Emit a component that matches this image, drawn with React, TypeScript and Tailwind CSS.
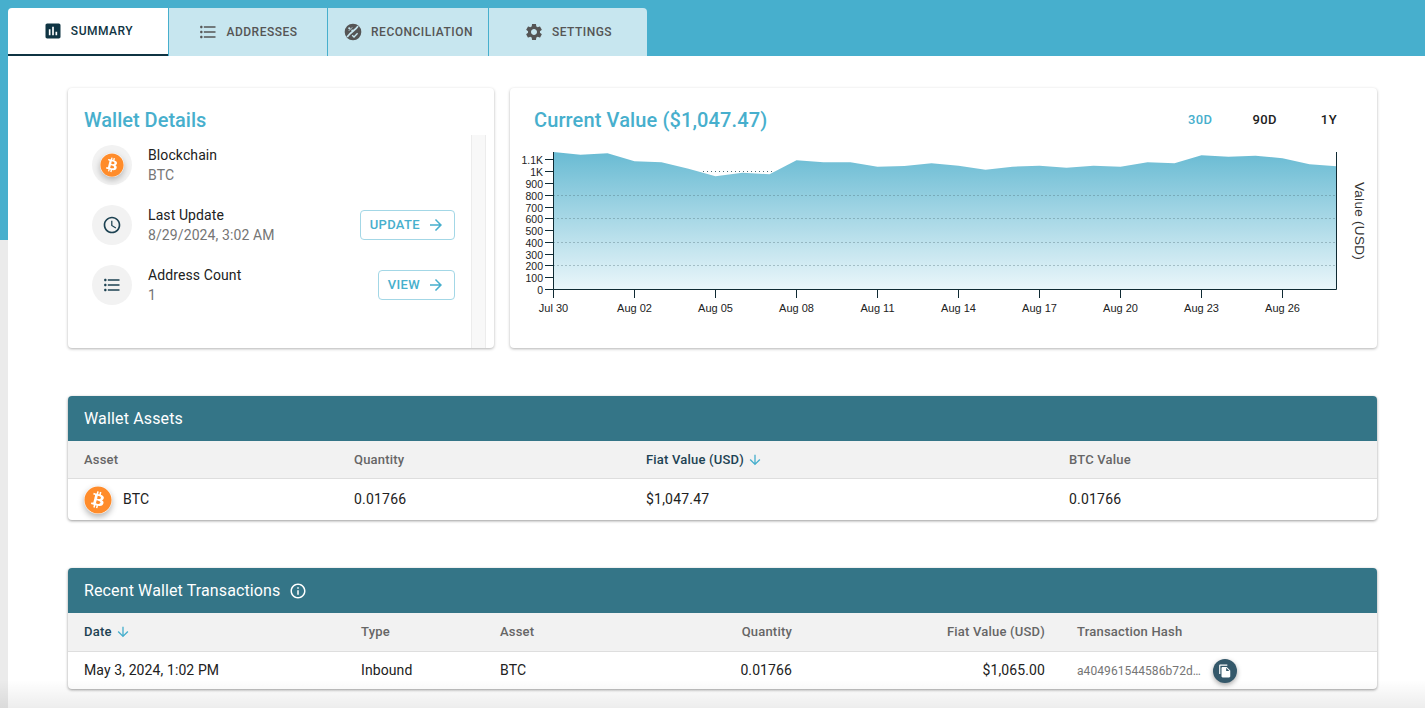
import React from 'react';
import { FaBitcoin } from 'react-icons/fa';

const paths = {
  assessment: 'M19 3H5c-1.1 0-2 .9-2 2v14c0 1.1.9 2 2 2h14c1.1 0 2-.9 2-2V5c0-1.1-.9-2-2-2zM9 17H7v-7h2v7zm4 0h-2V7h2v10zm4 0h-2v-4h2v4z',
  list: 'M4 10.5c-.83 0-1.5.67-1.5 1.5s.67 1.5 1.5 1.5 1.5-.67 1.5-1.5-.67-1.5-1.5-1.5zm0-6c-.83 0-1.5.67-1.5 1.5S3.17 7.5 4 7.5 5.5 6.83 5.5 6 4.83 4.5 4 4.5zm0 12c-.83 0-1.5.68-1.5 1.5s.68 1.5 1.5 1.5 1.5-.68 1.5-1.5-.67-1.5-1.5-1.5zM7 19h14v-2H7v2zm0-6h14v-2H7v2zm0-8v2h14V5H7z',
  settings: 'M19.14 12.94c.04-.3.06-.61.06-.94 0-.32-.02-.64-.07-.94l2.03-1.58c.18-.14.23-.41.12-.61l-1.92-3.32c-.12-.22-.37-.29-.59-.22l-2.39.96c-.5-.38-1.03-.7-1.62-.94l-.36-2.54c-.04-.24-.24-.41-.48-.41h-3.84c-.24 0-.43.17-.47.41l-.36 2.54c-.59.24-1.13.57-1.62.94l-2.39-.96c-.22-.08-.47 0-.59.22L2.74 8.87c-.12.21-.08.47.12.61l2.03 1.58c-.05.3-.09.63-.09.94s.02.64.07.94l-2.03 1.58c-.18.14-.23.41-.12.61l1.92 3.32c.12.22.37.29.59.22l2.39-.96c.5.38 1.03.7 1.62.94l.36 2.54c.05.24.24.41.48.41h3.84c.24 0 .44-.17.47-.41l.36-2.54c.59-.24 1.13-.56 1.62-.94l2.39.96c.22.08.47 0 .59-.22l1.92-3.32c.12-.22.07-.47-.12-.61l-2.01-1.58zM12 15.6c-1.98 0-3.6-1.62-3.6-3.6s1.62-3.6 3.6-3.6 3.6 1.62 3.6 3.6-1.62 3.6-3.6 3.6z',
  clock: 'M11.99 2C6.47 2 2 6.48 2 12s4.47 10 9.99 10C17.52 22 22 17.52 22 12S17.52 2 11.99 2zM12 20c-4.42 0-8-3.58-8-8s3.58-8 8-8 8 3.58 8 8-3.58 8-8 8zm.5-13H11v6l5.25 3.15.75-1.23-4.5-2.67z',
  arrowRight: 'M12 4l-1.41 1.41L16.17 11H4v2h12.17l-5.58 5.59L12 20l8-8z',
  arrowDown: 'M20 12l-1.41-1.41L13 16.17V4h-2v12.17l-5.58-5.59L4 12l8 8 8-8z',
  info: 'M11 7h2v2h-2zm0 4h2v6h-2zm1-9C6.48 2 2 6.48 2 12s4.48 10 10 10 10-4.48 10-10S17.52 2 12 2zm0 18c-4.41 0-8-3.59-8-8s3.59-8 8-8 8 3.59 8 8-3.59 8-8 8z',
  copy: 'M16 1H4c-1.1 0-2 .9-2 2v14h2V3h12V1zm-1 4l6 6v10c0 1.1-.9 2-2 2H7.99C6.89 23 6 22.1 6 21l.01-14c0-1.1.89-2 1.99-2h7zm-1 7h5.5L14 6.5V12z',
};

function Icon({ d, className }: { d: string; className?: string }) {
  return (
    <svg viewBox="0 0 24 24" className={className} fill="currentColor">
      <path d={d} />
    </svg>
  );
}

function ReconcileIcon() {
  return (
    <svg viewBox="0 0 24 24" className="h-5 w-5 text-[#555]">
      <circle cx="12" cy="12" r="10" fill="currentColor" />
      <path d="M18 5 C16 9 9 12 5 18" stroke="#c7e6ef" strokeWidth="2" fill="none" />
      <circle cx="7.5" cy="7.5" r="1.3" fill="#c7e6ef" />
      <circle cx="11" cy="10" r="1.1" fill="#c7e6ef" />
      <path d="M7 10.5 L11 6.5" stroke="#c7e6ef" strokeWidth="1.1" />
      <path d="M11 16 L13.2 18 L17.5 13.5" stroke="#c7e6ef" strokeWidth="1.6" fill="none" />
    </svg>
  );
}

function BtcLogo({ size }: { size: 'sm' | 'lg' }) {
  return (
    <span className={size === 'sm'
      ? 'flex h-6 w-6 items-center justify-center rounded-full bg-white text-[#ff8c2b] shadow-[0_3px_6px_rgba(0,0,0,0.25)]'
      : 'flex h-7 w-7 items-center justify-center rounded-full bg-white text-[#ff8c2b] shadow-[0_3px_6px_rgba(0,0,0,0.3)]'}>
      <FaBitcoin className={size === 'sm' ? 'h-6 w-6' : 'h-7 w-7'} />
    </span>
  );
}

function Tab({ label, icon, active, className }: { label: string; icon: React.ReactNode; active?: boolean; className: string }) {
  return (
    <div className={`flex h-12 items-center justify-center gap-2 text-[12px] font-medium tracking-[0.5px] ${active ? 'border-b-2 border-[#0f3443] bg-white text-[#0f3443]' : 'border-l border-[#47afcd] bg-[#c7e6ef] text-[#555]'} ${className}`}>
      {icon}
      <span>{label}</span>
    </div>
  );
}

function DetailRow({ icon, title, value, action }: { icon: React.ReactNode; title: string; value: string; action?: string }) {
  return (
    <div className="flex h-10 items-center">
      <div className="flex h-10 w-10 shrink-0 items-center justify-center rounded-full bg-[#f2f2f2]">{icon}</div>
      <div className="ml-4 flex-1 text-[14px] leading-5 tracking-[0.1px]">
        <div className="text-[#212121]">{title}</div>
        <div className="text-[#757575]">{value}</div>
      </div>
      {action && (
        <button className="mr-4 flex h-[30px] items-center gap-[7px] rounded border border-[#a3d7e6] px-[9px] text-[13px] font-medium tracking-[0.35px] text-[#47afcd]">
          {action}
          <Icon d={paths.arrowRight} className="h-[18px] w-[18px]" />
        </button>
      )}
    </div>
  );
}

// values are read off the reference, y in page pixels, one per day
const series = [152, 154.7, 153.3, 161.3, 162.3, 168.7, 176.3, 172.7, 174.3, 160.3, 162.3, 162.3, 166.7, 166, 163.3, 165.7, 169.7, 166.7, 165.7, 167.7, 165.7, 166.7, 162.3, 163.3, 155.3, 156.7, 155.7, 158.3, 164.3, 166.3];
const yTicks = ['0', '100', '200', '300', '400', '500', '600', '700', '800', '900', '1K', '1.1K'];
const yPos = [289.5, 277.5, 265.5, 254.5, 242.5, 230.5, 218.5, 207.5, 195.5, 183.5, 171.5, 159.5];
const xTicks = ['Jul 30', 'Aug 02', 'Aug 05', 'Aug 08', 'Aug 11', 'Aug 14', 'Aug 17', 'Aug 20', 'Aug 23', 'Aug 26'];
const dayX = (i: number) => 553.5 + i * 27;

function ValueChart() {
  const line = series.map((y, i) => `${dayX(i)},${y}`).join(' L');
  const area = `M${line} L1336.5,289.5 L553.5,289.5 Z`;
  return (
    <svg viewBox="510 132 867 216" className="block h-[216px] w-[867px]">
      <defs>
        <linearGradient id="valueFill" x1="0" y1="0" x2="0" y2="1">
          <stop offset="0%" stopColor="#69bbd3" />
          <stop offset="100%" stopColor="#eaf6fa" />
        </linearGradient>
      </defs>
      <path d={area} fill="url(#valueFill)" />
      <line x1="703" x2="773" y1="171.5" y2="171.5" stroke="#4b6b75" strokeDasharray="1 3" />
      {[195.5, 218.5, 242.5, 265.5].map((y) => (
        <line key={y} x1="553.5" x2="1336.5" y1={y} y2={y} stroke="#4b6b75" strokeDasharray="1 3" opacity="0.7" />
      ))}
      <path d="M553.5,152 V289.5 H1336.5 V152" fill="none" stroke="#0f2a33" strokeWidth="1" />
      {yPos.map((y, i) => (
        <g key={y}>
          <line x1="545" x2="553.5" y1={y} y2={y} stroke="#0f2a33" />
          <text x="543" y={y + 4} textAnchor="end" fontSize="10.5" fill="#222" fontFamily="'Liberation Sans', sans-serif">{yTicks[i]}</text>
        </g>
      ))}
      {xTicks.map((t, i) => (
        <g key={t}>
          <line x1={dayX(i * 3)} x2={dayX(i * 3)} y1="289.5" y2="298" stroke="#0f2a33" />
          <text x={dayX(i * 3)} y="312" textAnchor="middle" fontSize="11" fill="#222" fontFamily="'Liberation Sans', sans-serif">{t}</text>
        </g>
      ))}
      <text transform="translate(1355 221) rotate(90)" textAnchor="middle" fontSize="13.5" fill="#333" letterSpacing="0.3" fontFamily="'Liberation Sans', sans-serif">Value (USD)</text>
    </svg>
  );
}

function SortArrow() {
  return <Icon d={paths.arrowDown} className="ml-[3px] inline-block h-4 w-4 text-[#47afcd]" />;
}

export default function App() {
  return (
    <div className="relative flex h-[708px] w-[1425px] flex-col overflow-hidden bg-[#ebebeb] font-['Roboto',sans-serif]">
      <div className="absolute inset-x-0 top-0 h-[240px] bg-[#47afcd]" />

      <div className="relative flex pl-2 pt-2">
        <Tab label="SUMMARY" active className="w-40 rounded-tl" icon={<Icon d={paths.assessment} className="h-5 w-5" />} />
        <Tab label="ADDRESSES" className="w-[159px]" icon={<Icon d={paths.list} className="h-5 w-5" />} />
        <Tab label="RECONCILIATION" className="w-[161px]" icon={<ReconcileIcon />} />
        <Tab label="SETTINGS" className="w-[159px] rounded-tr" icon={<Icon d={paths.settings} className="h-5 w-5" />} />
      </div>

      <main className="relative ml-2 flex-1 bg-white pl-[60px] pr-12 pt-8">
        <div className="flex h-[260px] gap-4">
          <section className="flex w-[426px] flex-col rounded bg-white shadow-[0_1px_3px_rgba(0,0,0,0.3)]">
            <h2 className="pl-4 pt-5 text-[20px] font-medium leading-6 text-[#47afcd]">Wallet Details</h2>
            <div className="mt-[3px] flex min-h-0 flex-1 pl-6">
              <div className="flex flex-1 flex-col gap-5 pt-[10px]">
                <DetailRow icon={<BtcLogo size="sm" />} title="Blockchain" value="BTC" />
                <DetailRow icon={<Icon d={paths.clock} className="h-5 w-5 text-[#1d4252]" />} title="Last Update" value="8/29/2024, 3:02 AM" action="UPDATE" />
                <DetailRow icon={<Icon d={paths.list} className="h-5 w-5 text-[#1d4252]" />} title="Address Count" value="1" action="VIEW" />
              </div>
              <div className="mr-2 w-[15px] border-x border-[#ececec] bg-[#f8f8f8]" />
            </div>
          </section>

          <section className="flex-1 rounded bg-white shadow-[0_1px_3px_rgba(0,0,0,0.3)]">
            <div className="flex h-11 items-start justify-between pl-6 pr-10 pt-5">
              <h2 className="text-[20px] font-medium leading-6 tracking-[0.12px] text-[#47afcd]">Current Value ($1,047.47)</h2>
              <div className="flex gap-10 pt-1 text-[13px] font-medium leading-4 tracking-[0.4px] text-[#212121]">
                <span className="text-[#47afcd]">30D</span>
                <span>90D</span>
                <span className="ml-[4px]">1Y</span>
              </div>
            </div>
            <ValueChart />
          </section>
        </div>

        <section className="mt-12 overflow-hidden rounded bg-white shadow-[0_1px_3px_rgba(0,0,0,0.4)]">
          <div className="flex h-[45px] items-center bg-[#347587] pl-4 text-[16px] tracking-[0.15px] text-white">Wallet Assets</div>
          <div className="grid h-[38px] grid-cols-[270px_292px_423px_1fr] items-center border-b border-[#dedede] bg-[#f2f2f2] pl-4 text-[13px] font-medium tracking-[0.2px] text-[#666]">
            <span>Asset</span>
            <span>Quantity</span>
            <span className="flex items-center text-[#1d4252]">Fiat Value (USD)<SortArrow /></span>
            <span>BTC Value</span>
          </div>
          <div className="grid h-[41px] grid-cols-[270px_292px_423px_1fr] items-center pl-4 text-[14px] tracking-[0.2px] text-[#212121]">
            <span className="flex items-center gap-[11px]"><BtcLogo size="lg" />BTC</span>
            <span>0.01766</span>
            <span>$1,047.47</span>
            <span>0.01766</span>
          </div>
        </section>

        <section className="mt-12 overflow-hidden rounded bg-white shadow-[0_1px_3px_rgba(0,0,0,0.4)]">
          <div className="flex h-[45px] items-center gap-[9px] bg-[#347587] pl-4 text-[16px] tracking-[0.12px] text-white">
            Recent Wallet Transactions
            <Icon d={paths.info} className="h-[18px] w-[18px]" />
          </div>
          <div className="grid h-[39px] grid-cols-[277px_139px_160px_132px_253px_1fr] items-center border-b border-[#dedede] bg-[#f2f2f2] pl-4 text-[13px] font-medium tracking-[0.2px] text-[#666]">
            <span className="flex items-center text-[#1d4252]">Date<SortArrow /></span>
            <span>Type</span>
            <span>Asset</span>
            <span className="text-right">Quantity</span>
            <span className="text-right">Fiat Value (USD)</span>
            <span className="pl-8">Transaction Hash</span>
          </div>
          <div className="grid h-[37px] grid-cols-[277px_139px_160px_132px_253px_1fr] items-center pl-4 text-[14px] tracking-[0.1px] text-[#212121]">
            <span>May 3, 2024, 1:02 PM</span>
            <span>Inbound</span>
            <span>BTC</span>
            <span className="text-right">0.01766</span>
            <span className="text-right">$1,065.00</span>
            <span className="flex items-center pl-8 text-[12px] tracking-[0.08px] text-[#757575]">
              a404961544586b72d…
              <span className="ml-3 flex h-6 w-6 items-center justify-center rounded-full bg-[#34586a] text-white shadow-[0_2px_5px_rgba(0,0,0,0.35)]">
                <Icon d={paths.copy} className="h-[14px] w-[14px]" />
              </span>
            </span>
          </div>
        </section>
      </main>

      <div className="pointer-events-none absolute inset-x-0 bottom-0 h-7 bg-gradient-to-b from-transparent to-[#00000012]" />
    </div>
  );
}
